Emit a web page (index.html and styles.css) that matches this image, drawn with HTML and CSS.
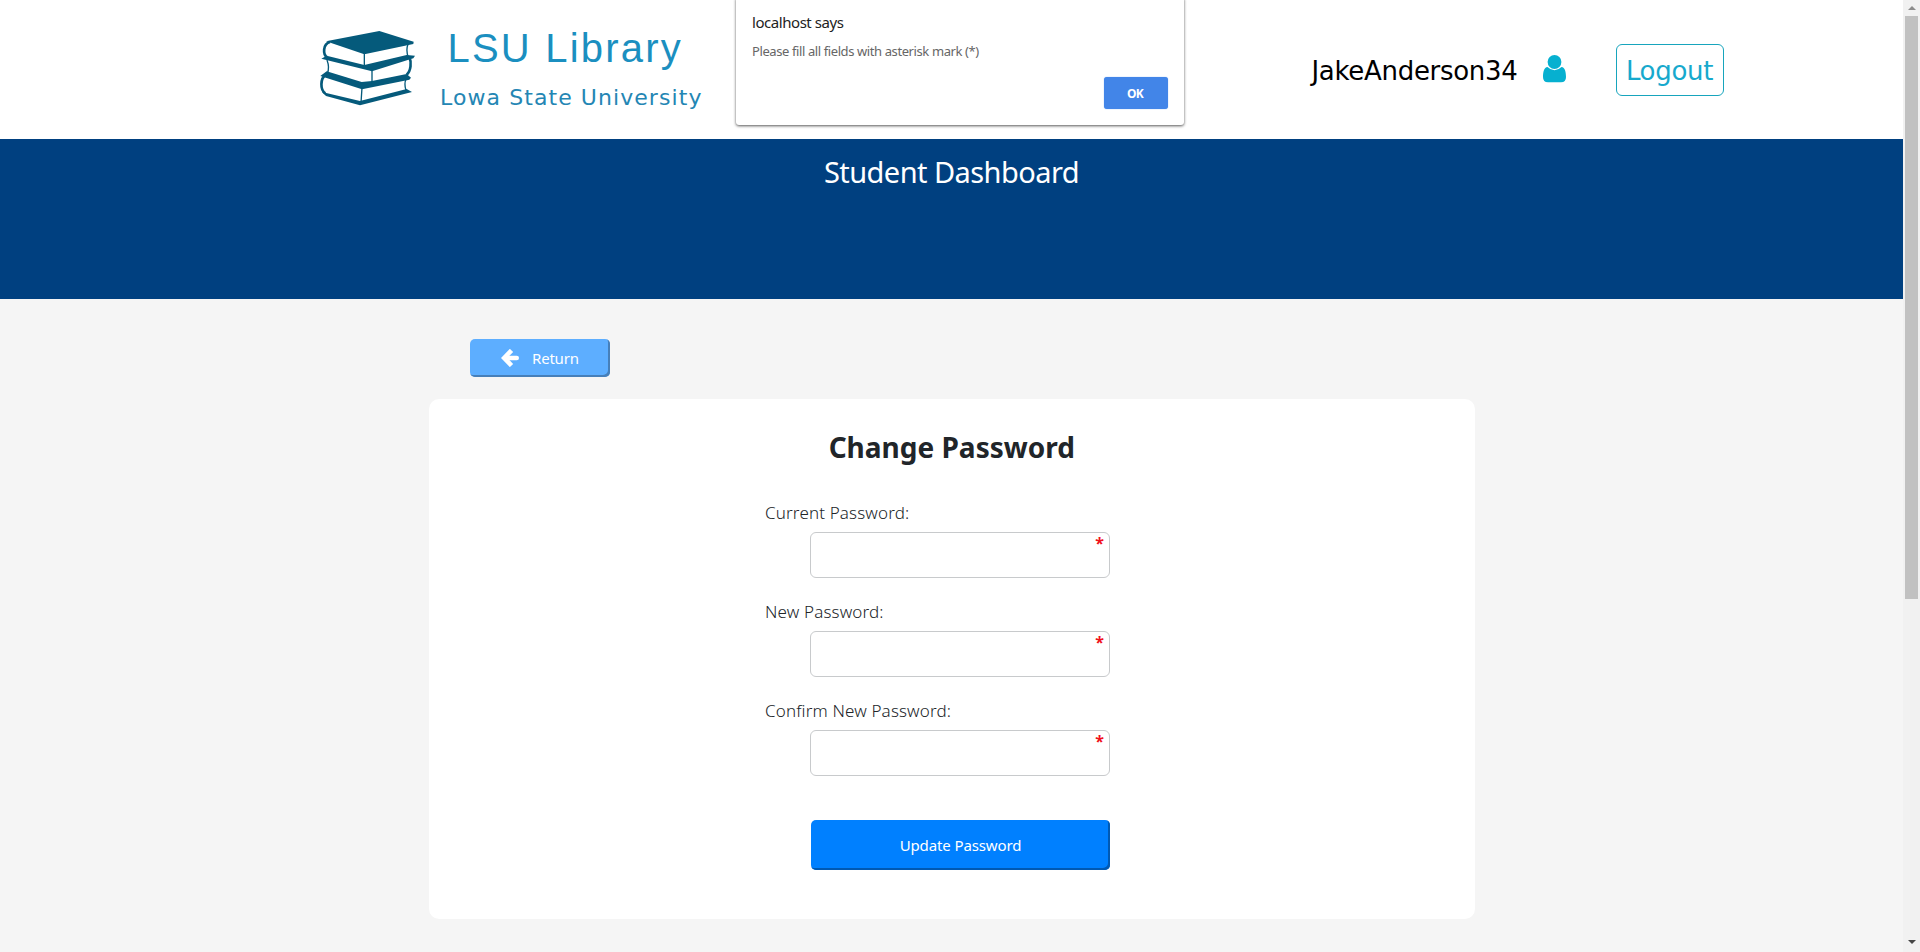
FILE: index.html
```html
<!DOCTYPE html>
<html lang="en">
<head>
<meta charset="utf-8">
<title>LSU Library - Change Password</title>
<link rel="stylesheet" href="styles.css">
</head>
<body>
<div class="page">
  <header class="header">
    <svg class="logo" viewBox="0 0 345 255" fill="none" stroke="#055a7b" stroke-linejoin="round">
      <path fill="#055a7b" stroke="none" d="M48 49 L208 18 L311 50 L310 57 L163 88 Z M34 101 L50 92 L163 120 L290 90 L315 92 L310 100 L186 139 Z M31 153 L50 139 L155 171 L186 168 L290 147 L303 158 L298 164 L156 193 Z M36 201 L150 228 L290 192 L306 201 L150 241 L48 213 Z"/>
      <path stroke-width="8" d="M60 51 C38 57 38 89 52 98 M298 95 C305 112 303 138 290 149 M48 149 C30 160 30 195 46 205"/>
      <path stroke-width="4" d="M163 83 V125 M186 133 V177 M156 187 L153 234 M294 58 C289 70 290 84 295 97 M51 105 C57 121 56 136 52 146 M288 162 C283 173 285 187 288 197"/>
    </svg>
    <div class="brand">
      <div class="brand-name">LSU Library</div>
      <div class="brand-sub">Lowa State University</div>
    </div>
    <div class="account">
      <span class="username">JakeAnderson34</span>
      <svg class="user-icon" viewBox="0 0 23 28" fill="#06b0d0"><circle cx="11.5" cy="7" r="6.9"/><path d="M4.5 12 Q8 15.3 11.5 15.3 Q15 15.3 18.5 12 C22 12.5 23 17 23 22 Q23 27.3 18 27.3 H5 Q0 27.3 0 22 C0 17 1 12.5 4.500 12Z"/></svg>
      <a class="logout"><span>Logout</span></a>
    </div>
  </header>
  <div class="banner"><span class="banner-text">Student Dashboard</span></div>
  <main class="content">
    <button class="return"><svg class="arrow" viewBox="0 0 18 18" fill="none" stroke="#fff" stroke-width="4.6"><path stroke-linecap="butt" d="M10.500 1.400 L3.200 9 L10.500 16.500"/><path stroke-linecap="round" d="M5 9 H15.700"/></svg><span class="return-text">Return</span></button>
    <section class="card">
      <h2 class="title"><span>Change Password</span></h2>
      <form class="form">
        <label class="label"><span>Current Password:</span></label>
        <div class="field"><span>*</span></div>
        <label class="label"><span>New Password:</span></label>
        <div class="field"><span>*</span></div>
        <label class="label"><span>Confirm New Password:</span></label>
        <div class="field"><span>*</span></div>
        <button class="update" type="button"><span>Update Password</span></button>
      </form>
    </section>
  </main>
</div>
<div class="scrollbar"><i class="up"></i><div class="thumb"></div><i class="down"></i></div>
<div class="dialog">
  <div class="dialog-title"><span>localhost says</span></div>
  <div class="dialog-text"><span>Please fill all fields with asterisk mark (*)</span></div>
  <button class="ok">OK</button>
</div>
</body>
</html>
```
FILE: styles.css
```css
* { box-sizing: border-box; }
body { margin: 0; width: 1920px; height: 952px; overflow: hidden; display: flex; font-family: "Noto Sans", sans-serif; background: #f5f5f5; }
button { font-family: inherit; border: 0; padding: 0; color: #fff; }
.page { width: 1903px; }
.header { height: 139px; background: #fff; display: flex; align-items: flex-start; padding-left: 310px; }
.logo { width: 115px; height: 85px; margin-top: 25px; }
.brand { margin: 28px 0 0 15px; width: 299.500px; white-space: nowrap; color: #1b8fc0; }
.brand-name { font: 40px/40px "Liberation Sans", sans-serif; letter-spacing: 2.200px; padding-left: 7.500px; }
.brand-sub { font: 22px/30px "DejaVu Sans", sans-serif; letter-spacing: 1.070px; margin-top: 15px; color: #2486b4; }
.account { display: flex; margin: 44px 0 0 571px; font-family: "DejaVu Sans", sans-serif; font-size: 26px; line-height: 52px; letter-spacing: -0.300px; color: #000; }
.username { width: 232px; margin-top: 1px; padding-left: 1px; }
.user-icon { width: 23px; height: 28px; margin-top: 11px; }
.logout { margin-left: 50px; width: 108px; height: 52px; border: 1px solid #17a5bd; border-radius: 6px; color: #17a9cd; display: flex; justify-content: center; }
.banner { height: 160px; background: #004080; color: #fff; text-align: center; font-size: 29px; line-height: 40px; letter-spacing: -0.550px; padding-top: 13px; }
.content { padding: 40px 428.500px 0 429px; }
.return { display: flex; margin-left: 41px; width: 140px; height: 38px; background: #5daeff; border-radius: 5px; box-shadow: inset -2px -2px 0 #467fb9; font-size: 15px; line-height: 38px; letter-spacing: -0.200px; }
.arrow { width: 18px; height: 18px; margin: 10px 13px 0 31px; }
.card { margin-top: 22px; height: 520px; background: #fff; border-radius: 10px; padding-top: 27px; }
.title { margin: 0; text-align: center; font-size: 28px; line-height: 42px; font-weight: 700; color: #212529; }
.form { margin: 28px 0 0 336px; width: 346px; }
.label { display: block; height: 36px; padding-top: 1px; font-size: 17px; line-height: 32px; font-weight: 300; letter-spacing: 0.150px; color: #212529; }
.field { margin: 0 0 17px 45px; width: 300px; height: 46px; border: 1px solid #c8cacc; border-radius: 6px; color: #f0101c; font-size: 16px; font-weight: 700; line-height: 20px; text-align: right; padding-right: 5px; }
.update { display: block; margin: 44px 0 0 46px; width: 299px; height: 50px; background: #0080ff; border-radius: 5px; box-shadow: inset -2px -2px 0 #0059b3; font-size: 15px; line-height: 50px; letter-spacing: -0.120px; }
.scrollbar { width: 17px; height: 952px; background: #f1f1f1; display: flex; flex-direction: column; align-items: center; }
.up { border: 4px solid transparent; border-top: 0; border-bottom-color: #8c8c8c; margin: 6px 0; }
.thumb { width: 13px; height: 583px; background: #c1c1c1; }
.down { border: 4px solid transparent; border-bottom: 0; border-top-color: #454545; margin-top: auto; margin-bottom: 8px; }
.dialog { position: absolute; left: 736px; top: -2px; width: 448px; height: 127px; background: #fff; border-radius: 0 0 3px 3px; box-shadow: 0 1px 3px 0 #000a; padding: 14px 16px 0; white-space: nowrap; }
.dialog-title { font-size: 15px; line-height: 20px; letter-spacing: -0.450px; color: #222; }
.dialog-text { font-size: 13px; line-height: 20px; letter-spacing: -0.400px; color: #666; margin-top: 9px; }
.ok { display: block; margin: 16px 0 0 auto; width: 64px; height: 32px; padding-right: 2px; background: #4285e8; border-radius: 3px; font-size: 12px; font-weight: 700; letter-spacing: -0.700px; box-shadow: 0 0 1px #5a9cf5; }
```
